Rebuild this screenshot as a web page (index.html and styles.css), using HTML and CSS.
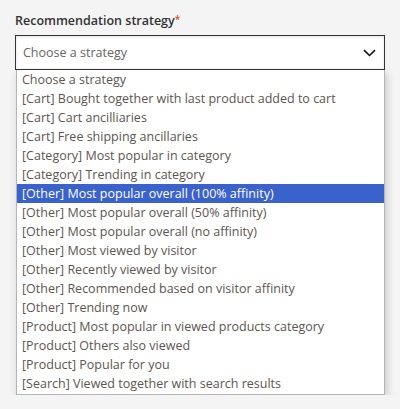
FILE: index.html
```html
<!DOCTYPE html>
<html>
<head>
<meta charset="utf-8">
<link rel="stylesheet" href="styles.css">
</head>
<body>
<div class="field">
  <div class="label">Recommendation strategy<span class="req">*</span></div>
  <div class="select">
    <span class="placeholder">Choose a strategy</span>
    <svg class="chev" width="13" height="8" viewBox="0 0 13 8"><path d="M1 1.2 L6.5 6.5 L12 1.2" fill="none" stroke="#111" stroke-width="1.6"/></svg>
  </div>
  <ul class="list">
    <li>Choose a strategy</li>
    <li>[Cart] Bought together with last product added to cart</li>
    <li>[Cart] Cart ancilliaries</li>
    <li>[Cart] Free shipping ancillaries</li>
    <li>[Category] Most popular in category</li>
    <li>[Category] Trending in category</li>
    <li class="active">[Other] Most popular overall (100% affinity)</li>
    <li>[Other] Most popular overall (50% affinity)</li>
    <li>[Other] Most popular overall (no affinity)</li>
    <li>[Other] Most viewed by visitor</li>
    <li>[Other] Recently viewed by visitor</li>
    <li>[Other] Recommended based on visitor affinity</li>
    <li>[Other] Trending now</li>
    <li>[Product] Most popular in viewed products category</li>
    <li>[Product] Others also viewed</li>
    <li>[Product] Popular for you</li>
    <li>[Search] Viewed together with search results</li>
  </ul>
</div>
</body>
</html>
```
FILE: styles.css
```css
html, body {
  margin: 0;
  padding: 0;
  background: #f4f4f4;
}
body {
  font-family: "Open Sans", "Noto Sans", sans-serif;
  font-size: 12.5px;
  color: #555;
}
.field {
  padding: 12px 15px 0 15px;
  width: 370px;
}
.label {
  font-weight: 600;
  color: #333;
  font-size: 12.5px;
  line-height: 18px;
  margin-bottom: 5px;
}
.req {
  color: #d9532b;
  font-size: 10px;
  vertical-align: top;
  line-height: 14px;
}
.select {
  box-sizing: border-box;
  height: 35px;
  border: 1px solid #333;
  background: #fff;
  box-shadow: inset 0 1px 3px rgba(0,0,0,0.12);
  display: flex;
  align-items: center;
  justify-content: space-between;
  padding: 0 8px 0 7px;
}
.placeholder {
  color: #666;
}
.chev {
  display: block;
}
.list {
  list-style: none;
  margin: 0 0 0 1px;
  padding: 0 0 1px 0;
  background: #fff;
  border: 1px solid #b5b5b5;
  border-top: none;
  box-shadow: 2px 3px 8px rgba(0,0,0,0.18);
}
.list li {
  height: 19px;
  line-height: 19px;
  padding-left: 5px;
  white-space: nowrap;
  color: #5d5550;
}
.list li.active {
  background: #3a62cc;
  color: #fff;
}
```
